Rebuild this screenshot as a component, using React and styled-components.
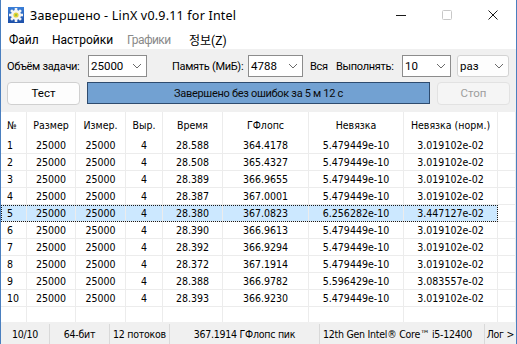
import React from "react";
import styled, { createGlobalStyle } from "styled-components";

const Global = createGlobalStyle`
  html, body { margin: 0; padding: 0; background: #ffffff; }
  #root { width: 517px; height: 344px; }
`;

const UI = `Roboto, "Noto Sans", "Noto Sans CJK KR", sans-serif`;
const TITLE = `"Noto Sans", sans-serif`;
const GRID = `"DejaVu Sans Condensed", "DejaVu Sans", sans-serif`;

const Window = styled.div`
  width: 517px;
  height: 344px;
  box-sizing: border-box;
  border-left: 1px solid #4a7fbf;
  border-right: 1px solid #4a7fbf;
  display: flex;
  flex-direction: column;
  background: #fff;
  font-family: ${UI};
  font-size: 12px;
  color: #000;
  overflow: hidden;
`;

const TitleBar = styled.div`
  height: 30px;
  display: flex;
  align-items: center;
  padding-left: 7px;
  flex-shrink: 0;
`;

const TitleText = styled.span`
  margin-left: 6px;
  font-family: ${TITLE};
  font-size: 12.5px;
  letter-spacing: 0.2px;
  flex: 1;
  white-space: nowrap;
`;

const CtrlBtn = styled.div`
  width: 46px;
  height: 30px;
  display: flex;
  align-items: center;
  justify-content: center;
  color: ${(p) => (p.$disabled ? "#c8c8c8" : "#1a1a1a")};
`;

const MenuBar = styled.div`
  height: 19px;
  display: flex;
  align-items: center;
  padding-left: 1px;
  flex-shrink: 0;
`;

const MenuItem = styled.span`
  width: ${(p) => (p.$w ? p.$w + "px" : "auto")};
  box-sizing: border-box;
  padding-left: 7px;
  color: ${(p) => (p.$disabled ? "#8a8a8a" : "#000")};
  white-space: nowrap;
  letter-spacing: ${(p) => (p.$tight ? "-0.6px" : "0")};
`;

const Toolbar = styled.div`
  background: #f0f0f0;
  padding: 6px 0 8px 6px;
  display: flex;
  flex-direction: column;
  gap: 5px;
  flex-shrink: 0;
  font-size: 11px;
`;

const Row = styled.div`
  display: flex;
  align-items: center;
  height: 22px;
`;

const Label = styled.span`
  width: ${(p) => p.$w}px;
  margin-left: ${(p) => p.$ml || 0}px;
  white-space: nowrap;
  flex-shrink: 0;
  letter-spacing: -0.3px;
`;

const Combo = styled.div`
  width: ${(p) => p.$w}px;
  margin-left: ${(p) => p.$ml || 0}px;
  height: 22px;
  box-sizing: border-box;
  flex-shrink: 0;
  display: flex;
  align-items: center;
  background: ${(p) => (p.$flat ? "#fdfdfd" : "#ffffff")};
  border: 1px solid ${(p) => (p.$flat ? "#d3d3d3" : "#8c8c8c")};
  border-radius: ${(p) => (p.$flat ? "3px" : "0")};
  padding-left: 2px;
  font-size: 11.5px;
`;

const ComboText = styled.span`
  flex: 1;
`;

const Arrow = styled.span`
  width: 18px;
  display: flex;
  align-items: center;
  justify-content: center;
`;

const Button = styled.div`
  width: ${(p) => p.$w}px;
  margin-left: ${(p) => p.$ml || 0}px;
  height: 23px;
  box-sizing: border-box;
  flex-shrink: 0;
  display: flex;
  align-items: center;
  justify-content: center;
  border-radius: 4px;
  background: ${(p) => (p.$disabled ? "#f5f5f5" : "#fdfdfd")};
  border: 1px solid ${(p) => (p.$disabled ? "#e2e2e2" : "#d0d0d0")};
  color: ${(p) => (p.$disabled ? "#9d9d9d" : "#000")};
  font-size: 11.5px;
`;

const Progress = styled.div`
  width: ${(p) => p.$w}px;
  margin-left: ${(p) => p.$ml || 0}px;
  height: 22px;
  box-sizing: border-box;
  flex-shrink: 0;
  display: flex;
  align-items: center;
  justify-content: center;
  background: #72a1d2;
  border: 1px solid #2e4b6e;
  color: #0a0a0a;
  white-space: nowrap;
  letter-spacing: -0.3px;
`;

const Table = styled.div`
  flex: 1;
  display: flex;
  flex-direction: column;
  font-family: ${GRID};
  font-size: 10.5px;
  min-height: 0;
`;

const COLS = [26, 49, 50, 37, 60, 86, 95, 94];

const Line = styled.div`
  display: flex;
  height: ${(p) => p.$h}px;
  flex: ${(p) => (p.$grow ? 1 : "none")};
  box-sizing: border-box;
`;

const Group = styled.div`
  display: grid;
  grid-template-columns: ${COLS.map((c) => c + "px").join(" ")};
  background: ${(p) => (p.$sel ? "#cce8ff" : "transparent")};
  outline: ${(p) => (p.$sel ? "1px dotted #1a1a1a" : "none")};
  outline-offset: -1px;
`;

const Cell = styled.div`
  box-sizing: border-box;
  border-right: 1px solid #ececec;
  border-bottom: ${(p) => (p.$noBottom ? "none" : "1px solid #ececec")};
  display: flex;
  align-items: center;
  justify-content: ${(p) => (p.$left ? "flex-start" : "center")};
  padding-left: ${(p) => (p.$left ? "6px" : "0")};
  white-space: nowrap;
  overflow: hidden;
`;

const Filler = styled(Cell)`
  flex: 1;
`;

const StatusBar = styled.div`
  height: 22px;
  flex-shrink: 0;
  background: #f0f0f0;
  display: flex;
  font-family: ${GRID};
  font-size: 10.5px;
  letter-spacing: -0.25px;
`;

const StatusCell = styled.div`
  width: ${(p) => (p.$w ? p.$w + "px" : "auto")};
  flex: ${(p) => (p.$w ? "none" : 1)};
  box-sizing: border-box;
  border-right: ${(p) => (p.$last ? "none" : "1px solid #d9d9d9")};
  margin-top: 2px;
  display: flex;
  align-items: center;
  justify-content: ${(p) => (p.$left ? "flex-start" : "center")};
  padding-left: ${(p) => (p.$left ? "3px" : "0")};
  white-space: nowrap;
  overflow: hidden;
`;

const Chevron = () => (
  <svg width="10" height="6" viewBox="0 0 10 6">
    <polyline points="1,1 5,5 9,1" fill="none" stroke="#6a6a6a" strokeWidth="1" />
  </svg>
);

const AppIcon = () => (
  <svg width="16" height="16" viewBox="0 0 16 16">
    <defs>
      <linearGradient id="bg" x1="0" y1="0" x2="0" y2="1">
        <stop offset="0" stopColor="#3a7fd8" />
        <stop offset="1" stopColor="#1c4fa8" />
      </linearGradient>
    </defs>
    <rect x="0" y="0" width="16" height="16" fill="url(#bg)" />
    <g transform="translate(8 8)" fill="#f4f4f4">
      {[0, 45, 90, 135, 180, 225, 270, 315].map((a) => (
        <rect key={a} x="-1.3" y="-7" width="2.6" height="3.2" transform={`rotate(${a})`} />
      ))}
      <circle r="5" />
      <circle r="2.6" fill="#e8d23a" />
      <circle r="1.2" fill="#9bc23a" />
    </g>
  </svg>
);

const rows = [
  ["1", "28.588", "364.4178", "5.479449e-10", "3.019102e-02"],
  ["2", "28.508", "365.4327", "5.479449e-10", "3.019102e-02"],
  ["3", "28.389", "366.9655", "5.479449e-10", "3.019102e-02"],
  ["4", "28.387", "367.0001", "5.479449e-10", "3.019102e-02"],
  ["5", "28.380", "367.0823", "6.256282e-10", "3.447127e-02"],
  ["6", "28.390", "366.9613", "5.479449e-10", "3.019102e-02"],
  ["7", "28.392", "366.9294", "5.479449e-10", "3.019102e-02"],
  ["8", "28.372", "367.1914", "5.479449e-10", "3.019102e-02"],
  ["9", "28.388", "366.9782", "5.596429e-10", "3.083557e-02"],
  ["10", "28.393", "366.9230", "5.479449e-10", "3.019102e-02"],
];

const headers = ["№", "Размер", "Измер.", "Выр.", "Время", "ГФлопс", "Невязка", "Невязка (норм.)"];

export default function App() {
  return (
    <>
      <Global />
      <Window>
        <TitleBar>
          <AppIcon />
          <TitleText>Завершено - LinX v0.9.11 for Intel</TitleText>
          <CtrlBtn>
            <svg width="10" height="10" viewBox="0 0 10 10">
              <line x1="0" y1="5.5" x2="10" y2="5.5" stroke="currentColor" strokeWidth="1" />
            </svg>
          </CtrlBtn>
          <CtrlBtn $disabled>
            <svg width="10" height="10" viewBox="0 0 10 10">
              <rect x="0.5" y="0.5" width="9" height="9" rx="1" fill="none" stroke="currentColor" strokeWidth="1" />
            </svg>
          </CtrlBtn>
          <CtrlBtn>
            <svg width="10" height="10" viewBox="0 0 10 10">
              <path d="M0.5 0.5 L9.5 9.5 M9.5 0.5 L0.5 9.5" stroke="currentColor" strokeWidth="1" />
            </svg>
          </CtrlBtn>
        </TitleBar>
        <MenuBar>
          <MenuItem $w={43}>Файл</MenuItem>
          <MenuItem $w={75}>Настройки</MenuItem>
          <MenuItem $w={62} $tight $disabled>Графики</MenuItem>
          <MenuItem>정보(Z)</MenuItem>
        </MenuBar>
        <Toolbar>
          <Row>
            <Label $w={81}>Объём задачи:</Label>
            <Combo $w={59}>
              <ComboText>25000</ComboText>
              <Arrow><Chevron /></Arrow>
            </Combo>
            <Label $w={76} $ml={25}>Память (МиБ):</Label>
            <Combo $w={55}>
              <ComboText>4788</ComboText>
              <Arrow><Chevron /></Arrow>
            </Combo>
            <Label $w={26} $ml={7}>Вся</Label>
            <Label $w={66}>Выполнять:</Label>
            <Combo $w={49}>
              <ComboText>10</ComboText>
              <Arrow><Chevron /></Arrow>
            </Combo>
            <Combo $w={52} $ml={6} $flat>
              <ComboText>раз</ComboText>
              <Arrow><Chevron /></Arrow>
            </Combo>
          </Row>
          <Row>
            <Button $w={73}>Тест</Button>
            <Progress $w={343} $ml={7}>Завершено без ошибок за 5 м 12 с</Progress>
            <Button $w={73} $ml={7} $disabled>Стоп</Button>
          </Row>
        </Toolbar>
        <Table>
          <Line $h={25}>
            <Group>
              {headers.map((h, i) => (
                <Cell key={i} $left={i === 0} $noBottom>{h}</Cell>
              ))}
            </Group>
            <Filler $noBottom />
          </Line>
          {rows.map((r) => (
            <Line key={r[0]} $h={17}>
              <Group $sel={r[0] === "5"}>
                <Cell $left>{r[0]}</Cell>
                <Cell>25000</Cell>
                <Cell>25000</Cell>
                <Cell>4</Cell>
                <Cell>{r[1]}</Cell>
                <Cell>{r[2]}</Cell>
                <Cell>{r[3]}</Cell>
                <Cell>{r[4]}</Cell>
              </Group>
              <Filler />
            </Line>
          ))}
          <Line $grow>
            <Group>
              {COLS.map((c, i) => (
                <Cell key={i} $noBottom />
              ))}
            </Group>
            <Filler $noBottom />
          </Line>
        </Table>
        <StatusBar>
          <StatusCell $w={49}>10/10</StatusCell>
          <StatusCell $w={60}>64-бит</StatusCell>
          <StatusCell $w={60}>12 потоков</StatusCell>
          <StatusCell $w={150}>367.1914 ГФлопс пик</StatusCell>
          <StatusCell $w={165} $left>12th Gen Intel® Core™ i5-12400</StatusCell>
          <StatusCell $last>Лог &gt;</StatusCell>
        </StatusBar>
      </Window>
    </>
  );
}
